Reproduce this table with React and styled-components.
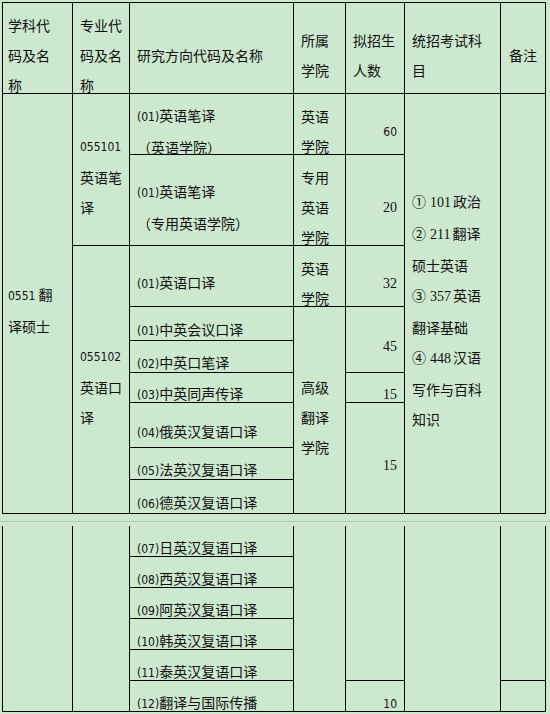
import React from 'react';
import styled, { createGlobalStyle } from 'styled-components';

const GlobalStyle = createGlobalStyle`
  body {
    margin: 0;
    background: #cce8cf;
  }
`;

const Page = styled.div`
  min-height: 714px;
  padding: 2px 0 0 2px;
  background: #cce8cf;
  font-family: "Noto Sans CJK SC", "Noto Sans", sans-serif;
  font-size: 14px;
  color: #111;
`;

const Grid = styled.div`
  display: grid;
  width: max-content;
  grid-template-columns: 70px 57px 164px 52px 59px 96px 45px;
  grid-template-rows: ${(p) => p.$rows};
  border-left: 1px solid #000;
  border-top: ${(p) => (p.$top ? '1px solid #000' : 'none')};
`;

const Box = styled.div`
  grid-column: ${(p) => p.$col};
  grid-row: ${(p) => p.$row};
  box-sizing: border-box;
  display: flex;
  flex-direction: column;
  justify-content: center;
  min-height: 0;
  padding: 13px ${(p) => (p.$pad != null ? p.$pad : 6)}px 0;
  border-right: 1px solid #000;
  border-bottom: 1px solid #000;
  line-height: 30px;
  white-space: nowrap;
  text-align: ${(p) => p.$align || 'left'};
`;

const Inner = styled.div``;

const Num = styled.span`
  font-family: "DejaVu Sans Condensed", "Liberation Sans", sans-serif;
  font-size: 12px;
`;

// 宋体 style half-width digits
const Song = styled.span`
  font-family: "Liberation Serif", serif;
  font-size: 14px;
  margin: ${(p) => (p.$gap ? '0 2px 0 4px' : '0')};
`;

const Divider = styled.div`
  height: 1px;
  margin: 7px 0 4px -2px;
  background: #b3c7b5;
`;

const Cell = ({ col, row, align, pad, children }) => (
  <Box $col={col} $row={row} $align={align} $pad={pad}>
    <Inner>{children}</Inner>
  </Box>
);

const firstDirections = [
  ['(01)', '英语笔译', '（英语学院）'],
  ['(01)', '英语笔译', '（专用英语学院）'],
  ['(01)', '英语口译'],
  ['(01)', '中英会议口译'],
  ['(02)', '中英口笔译'],
  ['(03)', '中英同声传译'],
  ['(04)', '俄英汉复语口译'],
  ['(05)', '法英汉复语口译'],
  ['(06)', '德英汉复语口译'],
];

const secondDirections = [
  ['(07)', '日英汉复语口译'],
  ['(08)', '西英汉复语口译'],
  ['(09)', '阿英汉复语口译'],
  ['(10)', '韩英汉复语口译'],
  ['(11)', '泰英汉复语口译'],
  ['(12)', '翻译与国际传播'],
];

const Direction = ({ item, row }) => (
  <Cell col="3" row={row} pad={7}>
    <Num>{item[0]}</Num>
    {item[1]}
    {item[2] && (
      <>
        <br />
        {item[2]}
      </>
    )}
  </Cell>
);

const App = () => (
  <Page>
    <GlobalStyle />
    <Grid $top $rows="91px 61px 91px 61px 34px 32px 30px 45px 32px 34px">
      <Cell col="1" row="1" pad={5}>学科代<br />码及名<br />称</Cell>
      <Cell col="2" row="1" pad={7}>专业代<br />码及名<br />称</Cell>
      <Cell col="3" row="1" pad={7}>研究方向代码及名称</Cell>
      <Cell col="4" row="1" pad={7}>所属<br />学院</Cell>
      <Cell col="5" row="1" pad={7}>拟招生<br />人数</Cell>
      <Cell col="6" row="1" pad={7}>统招考试科<br />目</Cell>
      <Cell col="7" row="1" align="center" pad={0}>备注</Cell>

      <Cell col="1" row="2 / 11" pad={5}><Num>0551</Num> 翻<br />译硕士</Cell>
      <Cell col="2" row="2 / 4" pad={7}><Num>055101</Num><br />英语笔<br />译</Cell>
      <Cell col="2" row="4 / 11" pad={7}><Num>055102</Num><br />英语口<br />译</Cell>

      {firstDirections.map((item, i) => (
        <Direction key={i} item={item} row={`${i + 2}`} />
      ))}

      <Cell col="4" row="2" pad={7}>英语<br />学院</Cell>
      <Cell col="4" row="3" pad={7}>专用<br />英语<br />学院</Cell>
      <Cell col="4" row="4" pad={7}>英语<br />学院</Cell>
      <Cell col="4" row="5 / 11" pad={7}>高级<br />翻译<br />学院</Cell>

      <Cell col="5" row="2" align="right" pad={7}><Num>60</Num></Cell>
      <Cell col="5" row="3" align="right" pad={7}><Song>20</Song></Cell>
      <Cell col="5" row="4" align="right" pad={7}><Song>32</Song></Cell>
      <Cell col="5" row="5 / 7" align="right" pad={7}><Song>45</Song></Cell>
      <Cell col="5" row="7" align="right" pad={7}><Song>15</Song></Cell>
      <Cell col="5" row="8 / 11" align="right" pad={7}><Song>15</Song></Cell>

      <Cell col="6" row="2 / 11" pad={7}>
        ①<Song $gap>101</Song>政治<br />
        ②<Song $gap>211</Song>翻译<br />
        硕士英语<br />
        ③<Song $gap>357</Song>英语<br />
        翻译基础<br />
        ④<Song $gap>448</Song>汉语<br />
        写作与百科<br />
        知识
      </Cell>
      <Cell col="7" row="2 / 11" />
    </Grid>

    <Divider />

    <Grid $rows="31px 31px 31px 31px 31px 31px">
      <Cell col="1" row="1 / 7" />
      <Cell col="2" row="1 / 7" />
      {secondDirections.map((item, i) => (
        <Direction key={i} item={item} row={`${i + 1}`} />
      ))}
      <Cell col="4" row="1 / 7" />
      <Cell col="5" row="1 / 6" />
      <Cell col="5" row="6" align="right" pad={7}><Num>10</Num></Cell>
      <Cell col="6" row="1 / 7" />
      <Cell col="7" row="1 / 6" />
      <Cell col="7" row="6" />
    </Grid>
  </Page>
);

export default App;
